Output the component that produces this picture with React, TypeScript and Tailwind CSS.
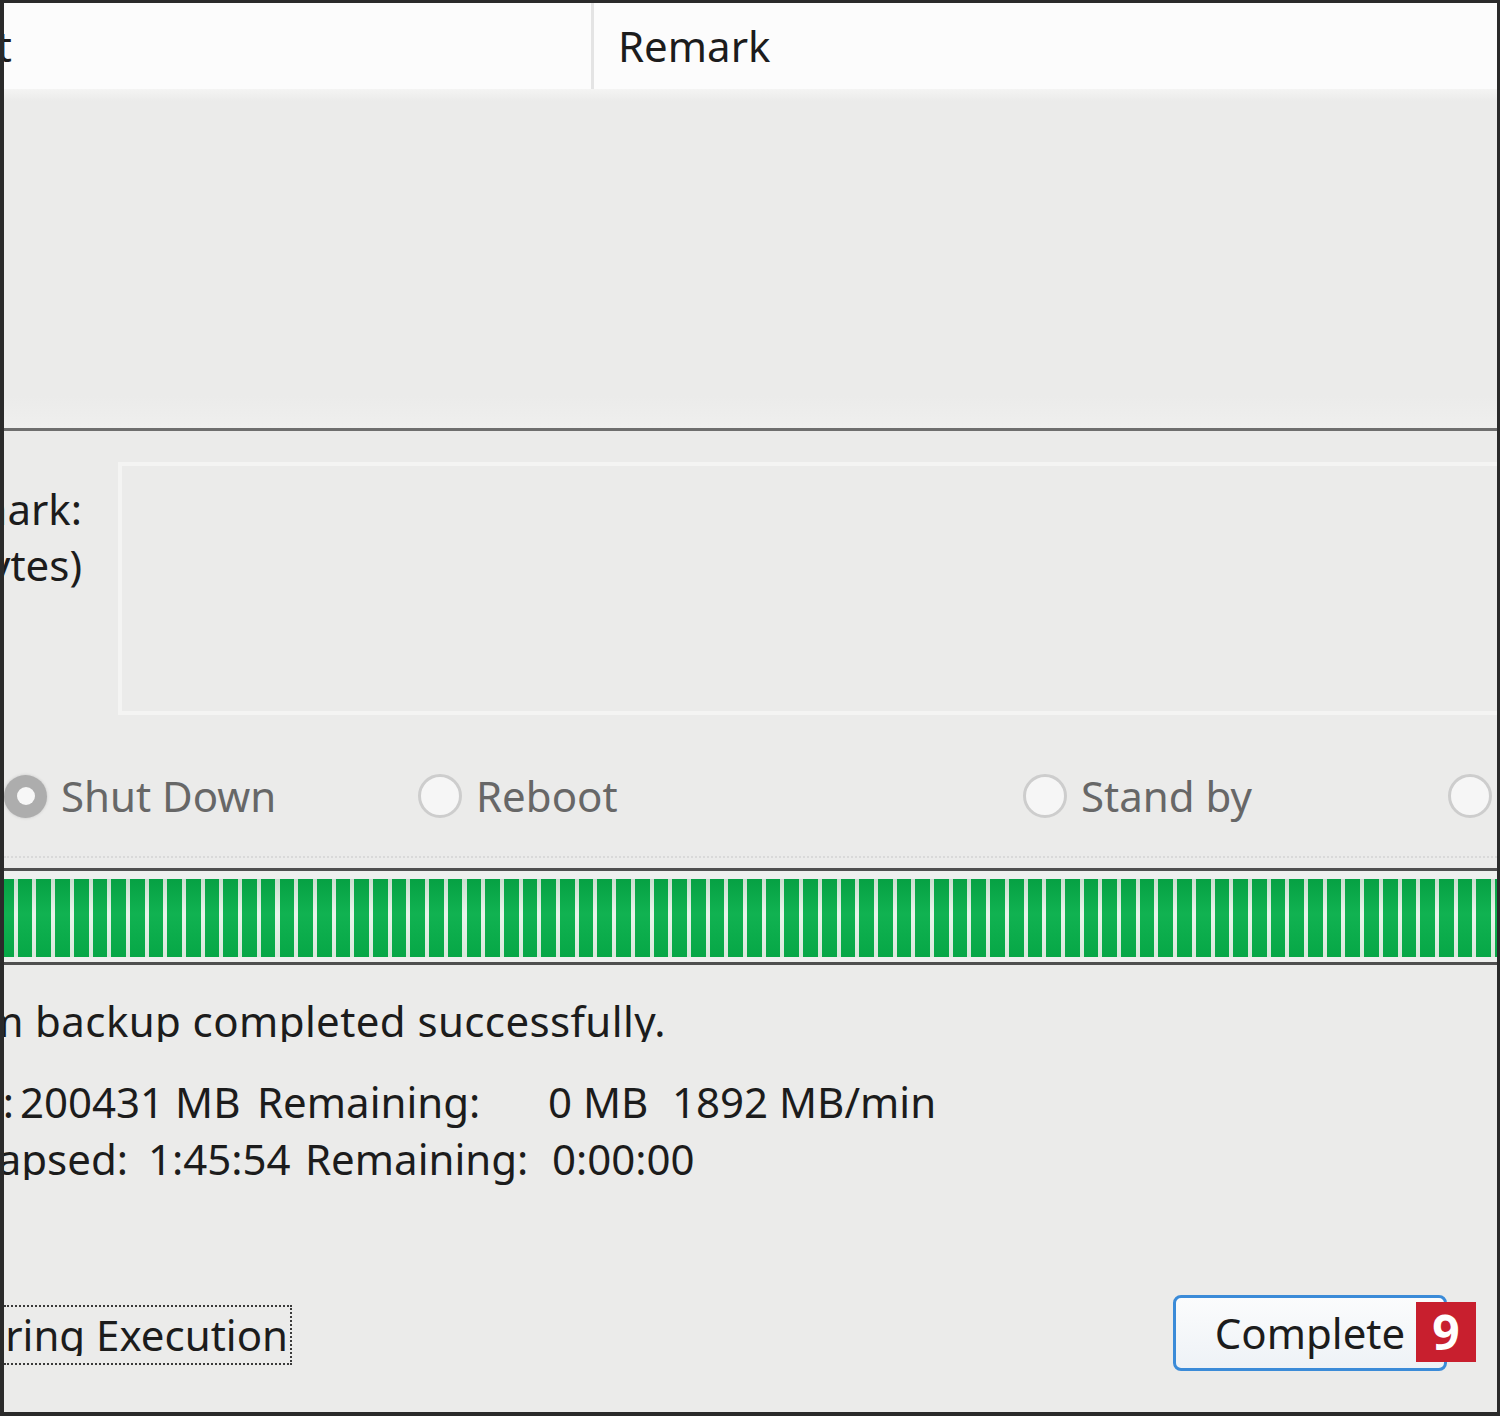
import type { ReactNode } from 'react'

// Text that starts left of the visible window: right-aligned inside a clipped box
function Clipped({ className, children }: { className: string; children: ReactNode }) {
  return (
    <div className={`flex shrink-0 justify-end overflow-hidden whitespace-nowrap ${className}`}>
      <span className="shrink-0">{children}</span>
    </div>
  )
}

function Radio({ checked, label }: { checked?: boolean; label?: string }) {
  return (
    <div className="flex items-center gap-[14px]">
      {checked ? (
        <span className="flex h-[43px] w-[43px] shrink-0 items-center justify-center rounded-full bg-[#adadad] shadow-[0_0_3px_#c4c4c4]">
          <span className="h-[18px] w-[18px] rounded-full bg-[#f7f7f7]" />
        </span>
      ) : (
        <span className="h-[44px] w-[44px] shrink-0 rounded-full border-[3px] border-[#cdcdcd] bg-[#f6f6f6]" />
      )}
      {label && <span className="whitespace-nowrap text-[#676767]">{label}</span>}
    </div>
  )
}

export default function App() {
  return (
    <div className="h-[1416px] w-[1500px] overflow-hidden border-t-[3px] border-r-[3px] border-b-[4px] border-l-[4px] border-[#2a2a2a] bg-[#ebebea] font-['Noto_Sans',sans-serif] text-[42px] leading-none text-[#1c1c1c]">
      {/* list header */}
      <div className="flex h-[86px] bg-[#fcfcfc]">
        <div className="flex w-[590px] items-center border-r-[3px] border-[#e4e4e4]">
          <Clipped className="w-[8px]">Point</Clipped>
        </div>
        <div className="flex items-center pl-[24px]">Remark</div>
      </div>
      <div className="h-[12px] bg-[linear-gradient(#f4f4f3,#ebebea)]" />

      {/* list body */}
      <div className="h-[330px] border-b-[3px] border-[#6e6e6e] bg-[linear-gradient(#ebebea_90%,#efefee)]" />

      {/* remark */}
      <div className="flex pt-[31px]">
        <div className="flex w-[78px] shrink-0 flex-col items-end overflow-hidden whitespace-nowrap pt-[19px] leading-[56px]">
          <span className="shrink-0">Remark:</span>
          <span className="shrink-0">(256 bytes)</span>
        </div>
        <div className="ml-[36px] h-[253px] flex-1 border-t-[4px] border-b-[4px] border-l-[4px] border-[#f4f4f3] bg-[#ebebea]" />
      </div>

      {/* after-completion options */}
      <div className="mt-[56px] grid h-[50px] grid-cols-[414px_605px_425px_1fr] items-center">
        <Radio checked label="Shut Down" />
        <Radio label="Reboot" />
        <Radio label="Stand by" />
        <Radio />
      </div>

      <div className="mt-[35px] border-t-2 border-dotted border-[#d9d9d9]" />

      {/* progress */}
      <div className="mt-[10px] border-t-[3px] border-b-[3px] border-[#4f4f4f] bg-[#eef0ee] pt-[8px] pb-[5px]">
        <div className="h-[78px] bg-[repeating-linear-gradient(90deg,#07af4a_0px,#07af4a_9.7px,#e6f4e9_9.7px,#e6f4e9_13.7px,#07af4a_13.7px,#07af4a_18.7px)]">
          <div className="h-full bg-[linear-gradient(rgba(0,60,20,0.12),rgba(255,255,255,0.04)_45%,rgba(0,40,10,0.06))]" />
        </div>
      </div>

      {/* status */}
      <div className="mt-[28px] flex h-[56px] items-center">
        <Clipped className="w-[662px] tracking-[0.4px]">System backup completed successfully.</Clipped>
      </div>
      <div className="mt-[25px] flex h-[56px] items-center whitespace-nowrap">
        <Clipped className="w-[10px]">Processed:</Clipped>
        <span className="ml-[6px] w-[237px]">200431 MB</span>
        <span className="w-[291px]">Remaining:</span>
        <span className="w-[124px]">0 MB</span>
        <span>1892 MB/min</span>
      </div>
      <div className="mt-[1px] flex h-[56px] items-center whitespace-nowrap">
        <Clipped className="w-[124px]">Time Elapsed:</Clipped>
        <span className="ml-[20px] w-[157px]">1:45:54</span>
        <span className="w-[247px]">Remaining:</span>
        <span>0:00:00</span>
      </div>

      {/* buttons */}
      <div className="mt-[108px] flex h-[76px] items-center justify-between">
        <div className="mt-[4px] flex h-[60px] items-center border-t-2 border-r-2 border-b-2 border-dotted border-[#3a3a3a] pr-[2px]">
          <Clipped className="w-[284px]">Operation during Execution</Clipped>
        </div>
        <div className="relative mr-[50px]">
          <div className="flex h-[76px] w-[274px] items-center justify-center rounded-[8px] border-[3px] border-[#3b8bd8] bg-[linear-gradient(#fbfcfd,#eef2f6)]">
            Complete
          </div>
          <div className="absolute top-[7px] left-[243px] flex h-[60px] w-[60px] items-center justify-center bg-[#c81f2e] text-[48px] font-bold text-white">
            9
          </div>
        </div>
      </div>
    </div>
  )
}
